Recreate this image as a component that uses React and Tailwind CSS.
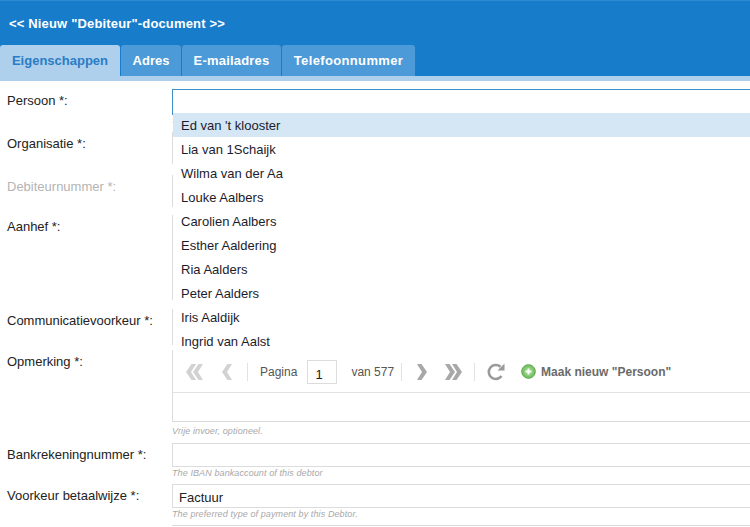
const people = [
  "Ed van 't klooster",
  "Lia van 1Schaijk",
  "Wilma van der Aa",
  "Louke Aalbers",
  "Carolien Aalbers",
  "Esther Aaldering",
  "Ria Aalders",
  "Peter Aalders",
  "Iris Aaldijk",
  "Ingrid van Aalst",
];

function Chevrons({ double, flip, color }) {
  const w = double ? 17 : 10;
  return (
    <svg width={w} height="16" viewBox={`0 0 ${w} 16`} fill={color} className="block">
      <g transform={flip ? `translate(${w} 0) scale(-1 1)` : undefined}>
        <path d="M5.5 0H10L5 8l5 8H5.5L0 8z" />
        {double && <path d="M12.5 0H17l-5 8 5 8h-4.500L7 8z" />}
      </g>
    </svg>
  );
}

function Sep() {
  return <div className="w-px h-[18px] bg-[#e2e2e2]" />;
}

function Row({ label, muted, className, children }) {
  return (
    <div className={`flex ${className}`}>
      <label className={`w-[172px] shrink-0 pl-[7px] pt-[4px] ${muted ? "text-[#b4b4b4]" : "text-[#222]"}`}>{label}</label>
      <div className="flex-1 -mr-[4px]">{children}</div>
    </div>
  );
}

function Hint({ children }) {
  return <p className="text-[9px] leading-[12px] italic tracking-[0.1px] text-[#a8a8a8]">{children}</p>;
}

export default function App() {
  return (
    <div className="relative w-[750px] h-[527px] overflow-hidden bg-white text-[13px] leading-[16px] font-['Liberation_Sans',Arial,sans-serif]">
      <header className="h-[76px] bg-[#177cca] border-t border-[#2f8ad2] flex flex-col justify-between">
        <h1 className="pl-[9px] pt-[15px] text-[13px] leading-[16px] font-bold tracking-[0.16px] text-white">{'<< Nieuw "Debiteur"-document >>'}</h1>
        <nav className="flex gap-px text-[13px] font-bold">
          <div className="w-[120px] h-[31px] pt-px rounded-t-[3px] bg-[#aed0ec] text-[#2a7cc6] flex items-center justify-center">Eigenschappen</div>
          <div className="w-[60px] h-[31px] pt-px rounded-t-[3px] bg-[#4c9ad8] text-white flex items-center justify-center">Adres</div>
          <div className="w-[99px] h-[31px] pt-px rounded-t-[3px] bg-[#4c9ad8] text-white flex items-center justify-center tracking-[0.2px]">E-mailadres</div>
          <div className="w-[133px] h-[31px] pt-px rounded-t-[3px] bg-[#4c9ad8] text-white flex items-center justify-center tracking-[0.35px]">Telefoonnummer</div>
        </nav>
      </header>
      <div className="h-[5px] bg-[#aed0ec]" />

      <div className="pt-[8px]">
        <Row label="Persoon *:" className="h-[43px]">
          <div className="h-[26px] border border-[#3f8fc9]" />
          <div className="h-[8px] border-b border-[#f3dcc6]" />
        </Row>
        <Row label="Organisatie *:" className="h-[43px]">
          <div className="h-[32px] border-l border-b border-l-[#dcdcdc] border-b-[#f3dcc6]" />
        </Row>
        <Row label="Debiteurnummer *:" muted className="h-[40px]">
          <div className="h-[32px] border-l border-b border-l-[#dcdcdc] border-b-[#f3dcc6]" />
        </Row>
        <Row label="Aanhef *:" className="h-[94px]">
          <div className="h-[85px] border-l border-b border-l-[#dcdcdc] border-b-[#f3dcc6]" />
        </Row>
        <Row label="Communicatievoorkeur *:" className="h-[41px]">
          <div className="h-[36px] border-l border-[#dcdcdc]" />
        </Row>
        <Row label="Opmerking *:" className="h-[93px]">
          <div className="h-[72px] border border-[#dcdcdc]" />
          <div className="mt-[3px]">
            <Hint>Vrije invoer, optioneel.</Hint>
          </div>
        </Row>
        <Row label="Bankrekeningnummer *:" className="h-[41px]">
          <div className="h-[24px] border border-[#dcdcdc]" />
          <Hint>The IBAN bankaccount of this debtor</Hint>
        </Row>
        <Row label="Voorkeur betaalwijze *:">
          <div className="h-[24px] border border-[#dcdcdc] pl-[6px] leading-[26px] text-[#222]">Factuur</div>
          <Hint>The preferred type of payment by this Debtor.</Hint>
          <div className="mt-[5px] h-[2px] border-t border-[#dcdcdc]" />
        </Row>
      </div>

      {/* opened combo list, lies over the form */}
      <div className="absolute left-[173px] top-[113px] w-[577px] bg-white">
        <ul>
          {people.map((p, i) => (
            <li key={p} className={`h-[24px] pl-[8px] pt-px leading-[24px] text-[#1c1c2c] ${i === 0 ? "bg-[#d5e6f5]" : ""}`}>{p}</li>
          ))}
        </ul>
        <div className="h-[40px] pb-[2px] border-b border-[#e2e2e2] flex items-center text-[12px] text-[#555]">
          <div className="ml-[13px]"><Chevrons double color="#d2d2d2" /></div>
          <div className="ml-[19px]"><Chevrons color="#d2d2d2" /></div>
          <div className="ml-[15px]"><Sep /></div>
          <span className="ml-[12px]">Pagina</span>
          <div className="ml-[10px] w-[30px] h-[24px] border border-[#dcdcdc] text-[13px] text-[#222] pl-[7px] pt-[6px]">1</div>
          <span className="ml-[14px]">van 577</span>
          <div className="ml-[7px]"><Sep /></div>
          <div className="ml-[15px]"><Chevrons flip color="#a8a8a8" /></div>
          <div className="ml-[18px]"><Chevrons flip double color="#a8a8a8" /></div>
          <div className="ml-[12px]"><Sep /></div>
          <svg className="ml-[12px]" width="18" height="18" viewBox="0 0 18 18" fill="none">
            <path d="M14.500 13A7 7 0 1 1 13.500 3.800" stroke="#9a9a9a" strokeWidth="2.600" />
            <path d="M10.500 7.500H17.500V.5z" fill="#9a9a9a" />
          </svg>
          <svg className="ml-[16px]" width="15" height="15" viewBox="0 0 15 15">
            <circle cx="7.500" cy="7.500" r="6.800" fill="#7cc26a" stroke="#5aa548" />
            <circle cx="7.500" cy="7.500" r="4.500" fill="#8fd07c" />
            <path d="M4.500 7.500h6M7.500 4.500v6" stroke="#fff" strokeWidth="2" />
          </svg>
          <span className="ml-[5px] font-bold text-[#6a6a6a]">Maak nieuw "Persoon"</span>
        </div>
      </div>
    </div>
  );
}
